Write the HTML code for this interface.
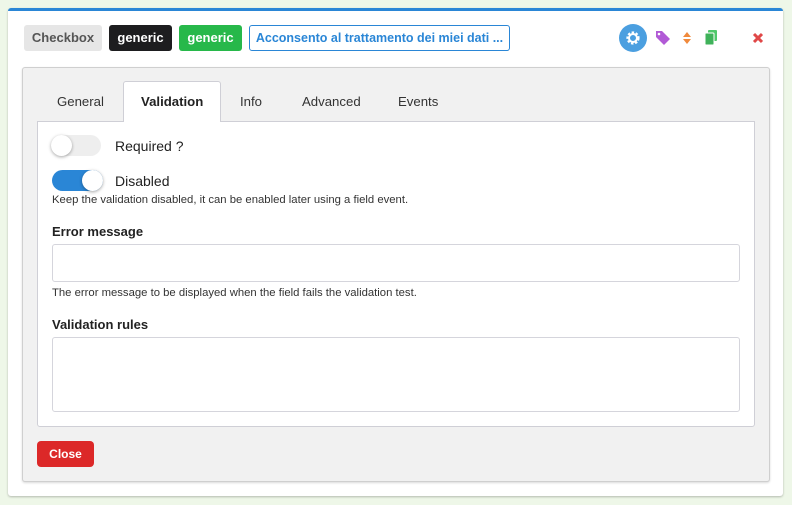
<!DOCTYPE html>
<html><head><meta charset="utf-8"><style>
*{box-sizing:border-box;margin:0;padding:0}
body{width:792px;height:505px;background:#eef7e8;font-family:"Liberation Sans",sans-serif;position:relative;overflow:hidden}
.card{position:absolute;left:8px;top:8px;width:775px;height:488px;background:#fff;border-top:3px solid #2a86d6;border-radius:3px;box-shadow:0 1px 2px rgba(0,0,0,.25)}
.badge{position:absolute;top:25px;height:26px;border-radius:3px;font-size:13px;font-weight:bold;line-height:26px;text-align:center}
.panel{position:absolute;left:22px;top:67px;width:748px;height:415px;background:#f1f1f1;border:1px solid #cfcfcf;border-radius:3px;box-shadow:0 1px 2px rgba(0,0,0,.15)}
.tab{position:absolute;top:94px;font-size:13.2px;color:#333}
.content{position:absolute;left:37px;top:121px;width:718px;height:306px;background:#fff;border:1px solid #cfcfd6;border-radius:0 0 3px 3px}
.lbl{position:absolute;font-size:14px;color:#222}
.help{position:absolute;font-size:11.3px;color:#333}
.h{position:absolute;font-size:13px;font-weight:bold;color:#222}
.inp{position:absolute;left:52px;width:688px;background:#fff;border:1px solid #d5d5dc;border-radius:3px}
</style></head><body>
<div class="card"></div>
<div class="badge" style="left:24px;width:78px;background:#e6e6e6;color:#555">Checkbox</div>
<div class="badge" style="left:109px;width:63px;background:#1d1d1f;color:#fff">generic</div>
<div class="badge" style="left:179px;width:63px;background:#27b84a;color:#fff">generic</div>
<div class="badge" style="left:249px;width:261px;background:#fff;border:1px solid #2a86d6;color:#2a86d6;line-height:24px;font-size:12.5px">Acconsento al trattamento dei miei dati ...</div>
<svg style="position:absolute;left:619px;top:24px" width="28" height="28" viewBox="0 0 28 28"><circle cx="14" cy="14" r="14" fill="#4b9fe0"/><circle cx="14" cy="14" r="5" fill="none" stroke="#fff" stroke-width="3.2" stroke-dasharray="2.2 1.5"/><circle cx="14" cy="14" r="4" fill="none" stroke="#fff" stroke-width="2"/></svg>
<svg style="position:absolute;left:655px;top:30px" width="16" height="16" viewBox="0 0 16 16"><path d="M1 1h6l8 8-6 6-8-8z" fill="#b15ad6"/><circle cx="4" cy="4" r="1.3" fill="#fff"/></svg>
<svg style="position:absolute;left:682px;top:31px" width="10" height="14" viewBox="0 0 10 14"><path d="M1 6L5 1l4 5zM1 8l4 5 4-5z" fill="#f08a3c"/></svg>
<svg style="position:absolute;left:704px;top:30px" width="14" height="16" viewBox="0 0 14 16"><rect x="4" y="0" width="9" height="11" rx="1" fill="#4fc86a"/><rect x="1" y="3" width="9" height="12" rx="1" fill="#3fb25a" stroke="#fff" stroke-width="1"/></svg>
<svg style="position:absolute;left:752px;top:32px" width="12" height="12" viewBox="0 0 12 12"><path d="M2 2l8 8M10 2l-8 8" stroke="#e04848" stroke-width="3"/></svg>
<div class="panel"></div>
<div style="position:absolute;left:123px;top:81px;width:98px;height:41px;background:#fff;border:1px solid #cfcfd6;border-bottom:none;border-radius:3px 3px 0 0;z-index:2"></div>
<div class="content"></div>
<div class="tab" style="left:57px">General</div>
<div class="tab" style="left:141px;font-weight:bold;color:#222;z-index:3">Validation</div>
<div class="tab" style="left:240px">Info</div>
<div class="tab" style="left:302px">Advanced</div>
<div class="tab" style="left:398px">Events</div>
<div style="position:absolute;left:51px;top:135px;width:50px;height:21px;border-radius:11px;background:#eee"></div>
<div style="position:absolute;left:51px;top:135px;width:21px;height:21px;border-radius:50%;background:#fff;box-shadow:0 1px 3px rgba(0,0,0,.35)"></div>
<div class="lbl" style="left:115px;top:138px">Required ?</div>
<div style="position:absolute;left:52px;top:170px;width:51px;height:21px;border-radius:11px;background:#2a86d6"></div>
<div style="position:absolute;left:82px;top:170px;width:21px;height:21px;border-radius:50%;background:#fff;box-shadow:0 1px 3px rgba(0,0,0,.35)"></div>
<div class="lbl" style="left:115px;top:173px">Disabled</div>
<div class="help" style="left:52px;top:194px">Keep the validation disabled, it can be enabled later using a field event.</div>
<div class="h" style="left:52px;top:224px">Error message</div>
<div class="inp" style="top:244px;height:38px"></div>
<div class="help" style="left:52px;top:287px">The error message to be displayed when the field fails the validation test.</div>
<div class="h" style="left:52px;top:317px">Validation rules</div>
<div class="inp" style="top:337px;height:75px"></div>
<div style="position:absolute;left:37px;top:441px;width:57px;height:26px;background:#dc2828;border-radius:4px;color:#fff;font-size:12px;font-weight:bold;text-align:center;line-height:26px">Close</div>
</body></html>
